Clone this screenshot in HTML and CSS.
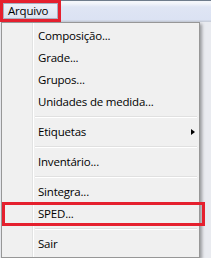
FILE: index.html
```html
<!DOCTYPE html>
<html>
<head>
<meta charset="utf-8">
<link rel="stylesheet" href="styles.css">
</head>
<body>
<div class="screen">
  <div class="menubar">
    <div class="top-item"><span class="top-label">Arquivo</span></div>
  </div>
  <div class="menu">
    <div class="item">Composição...</div>
    <div class="item">Grade...</div>
    <div class="item">Grupos...</div>
    <div class="item">Unidades de medida...</div>
    <div class="sep"></div>
    <div class="item has-sub">Etiquetas<span class="arrow"></span></div>
    <div class="sep"></div>
    <div class="item">Inventário...</div>
    <div class="sep"></div>
    <div class="item">Sintegra...</div>
    <div class="item marked">SPED...</div>
    <div class="sep"></div>
    <div class="item">Sair</div>
  </div>
</div>
</body>
</html>
```
FILE: styles.css
```css
html, body {
  margin: 0;
  padding: 0;
}
body {
  width: 211px;
  height: 258px;
  overflow: hidden;
  background: #e9ebf0;
  font-family: "Open Sans", "Noto Sans", sans-serif;
  font-size: 11.5px;
  letter-spacing: -0.2px;
  color: #000;
}
.screen {
  position: relative;
  width: 211px;
  height: 258px;
}
.menubar {
  height: 22px;
  background: linear-gradient(#6f7c8c 0, #6f7c8c 1px, #f4f6fb 1px, #f4f6fb 3px, #dfe5f4 7px, #dbe2f3 20px, #c9cfdb 21px, #c9cfdb 22px);
  display: flex;
}
.top-item {
  width: 61px;
  height: 22px;
  box-sizing: border-box;
  border: 3px solid #e5202e;
  background: #e5202e;
  display: flex;
}
.top-label {
  flex: 1;
  background: linear-gradient(#eef1f8, #dde3f0);
  border: 1px solid #a7b0c1;
  box-sizing: border-box;
  padding-left: 4px;
  line-height: 14px;
}
.menu {
  width: 199px;
  margin-left: 1px;
  border: 1px solid #979797;
  box-sizing: border-box;
  background: linear-gradient(to right, #f0f0f0 0, #f0f0f0 30px, #e2e3e3 30px, #e2e3e3 31px, #ffffff 31px, #ffffff 32px, #f0f0f0 32px);
  padding: 2px 2px 2px 2px;
  box-shadow: 2px 2px 3px rgba(0,0,0,0.35);
}
.item {
  position: relative;
  height: 22px;
  line-height: 22px;
  padding-left: 34px;
}
.sep {
  height: 8px;
  margin-left: 31px;
  background: linear-gradient(#f0f0f0 3px, #e0e0e0 3px, #e0e0e0 4px, #ffffff 4px, #ffffff 5px, #f0f0f0 5px);
}
.arrow {
  position: absolute;
  right: 2px;
  top: 8px;
  width: 0;
  height: 0;
  border-top: 3.5px solid transparent;
  border-bottom: 3.5px solid transparent;
  border-left: 4px solid #000;
}
.marked::after {
  content: "";
  position: absolute;
  left: -2px;
  right: -8px;
  top: -1px;
  bottom: -1px;
  border: 3px solid #e5202e;
}
```
